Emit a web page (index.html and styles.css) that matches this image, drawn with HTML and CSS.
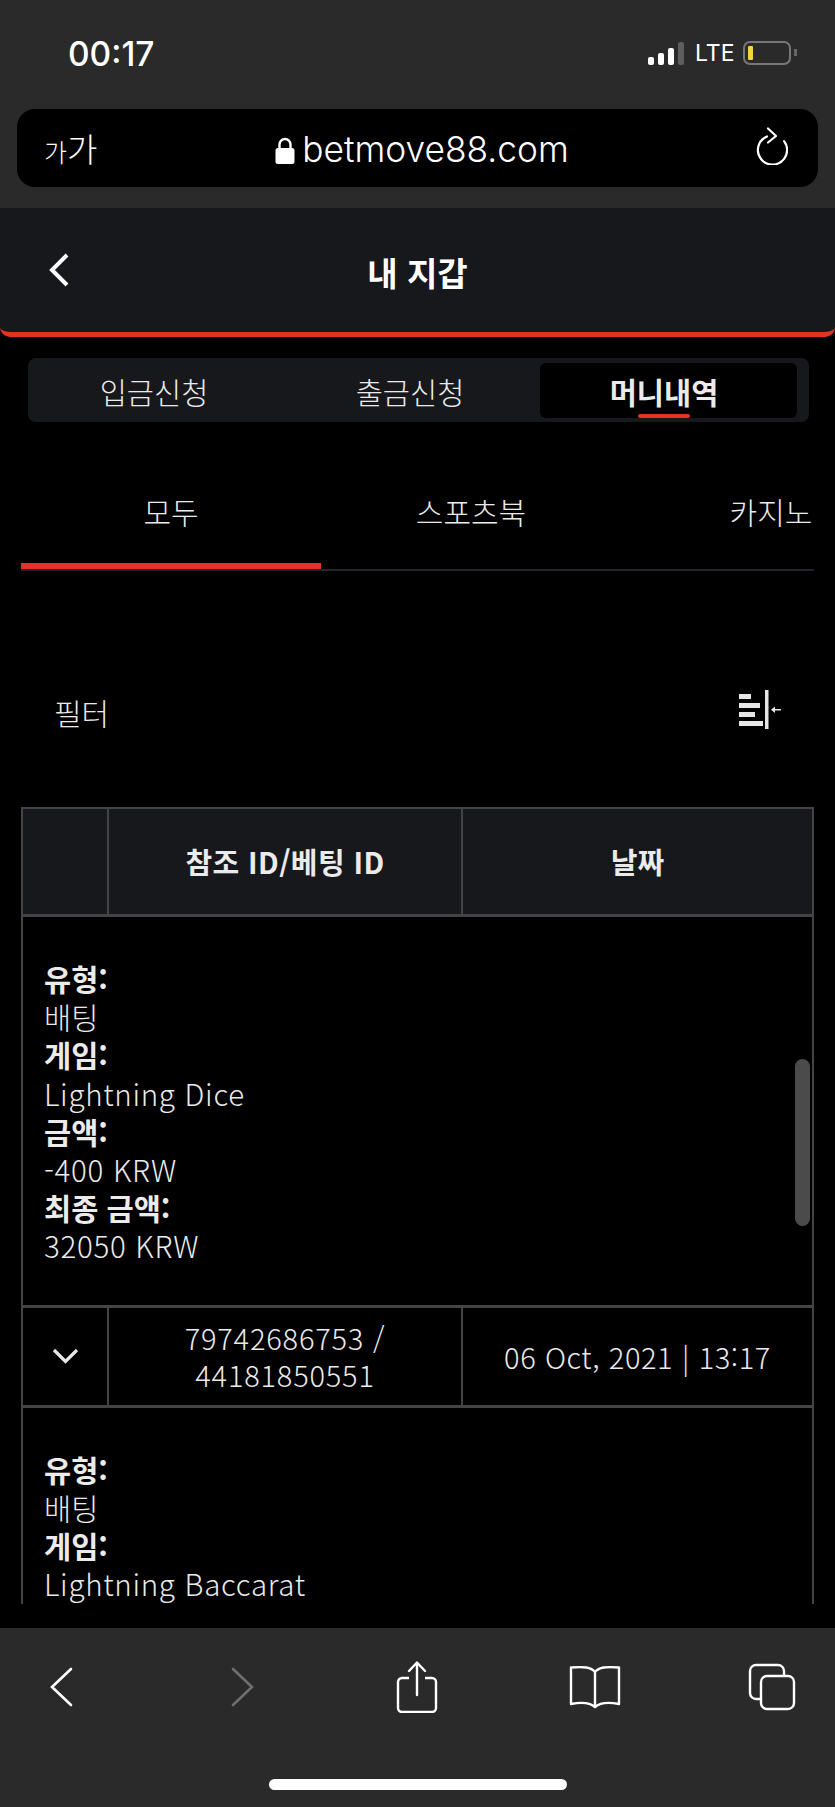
FILE: index.html
```html
<!DOCTYPE html>
<html lang="ko">
<head>
  <meta charset="UTF-8" />
  <meta name="viewport" content="width=device-width, initial-scale=1.0"/>
  <title>내 지갑</title>
  <link rel="stylesheet" href="styles.css">
</head>
<body>

  <!-- Browser top -->
  <section class="browser-top">
    <div class="status-bar">
      <span class="time">00:17</span>
      <div class="status-right">
        <div class="signal">
          <i class="bar b1"></i><i class="bar b2"></i><i class="bar b3"></i><i class="bar b4"></i>
        </div>
        <span class="lte">LTE</span>
        <div class="battery"><i class="battery-fill"></i></div>
        <i class="battery-nub"></i>
      </div>
    </div>
    <div class="url-bar">
      <span class="aa"><small>가</small>가</span>
      <div class="url">
        <svg class="lock" width="20" height="27" viewBox="0 0 20 27">
          <path d="M4.5 12V7.500a5.500 5.500 0 0 1 11 0V12" fill="none" stroke="#fff" stroke-width="2.400"/>
          <rect x="0.500" y="11" width="19" height="16" rx="2.500" fill="#fff"/>
        </svg>
        <span>betmove88.com</span>
      </div>
      <svg class="reload" width="32" height="38" viewBox="0 0 32 38">
        <path d="M11 9.500a14.600 14.600 0 1 0 10.500 -0.200" fill="none" stroke="#fff" stroke-width="2.200" stroke-linecap="round" stroke-dasharray="72 100"/>
        <path d="M12 1.500l8 7.500-8 6.500" fill="none" stroke="#fff" stroke-width="2.200" stroke-linecap="round" stroke-linejoin="round"/>
      </svg>
    </div>
  </section>

  <!-- Page header -->
  <header class="page-header">
    <svg class="header-back" width="20" height="34" viewBox="0 0 20 34">
      <path d="M18 2L3 17l15 15" fill="none" stroke="#fff" stroke-width="4"/>
    </svg>
    <h1>내 지갑</h1>
  </header>

  <!-- Wallet tabs -->
  <nav class="wallet-tabs">
    <div class="wallet-tab">입금신청</div>
    <div class="wallet-tab">출금신청</div>
    <div class="wallet-tab active">머니내역</div>
  </nav>

  <!-- Category tabs -->
  <nav class="cat-tabs">
    <div class="cat-tab active">모두</div>
    <div class="cat-tab">스포츠북</div>
    <div class="cat-tab">카지노</div>
  </nav>

  <div class="filter-row">
    <span>필터</span>
    <svg class="filter-icon" width="42" height="39" viewBox="0 0 42 39">
      <g fill="#e6e6e6">
        <rect x="0" y="4" width="12" height="5"/>
        <rect x="0" y="13" width="21" height="5"/>
        <rect x="0" y="22" width="16" height="5"/>
        <rect x="0" y="31" width="24" height="5"/>
        <rect x="26" y="0" width="3.500" height="39"/>
        <rect x="35" y="19" width="7" height="1.500"/>
        <path d="M32 19.700l4-3.200v6.400z"/>
      </g>
    </svg>
  </div>

  <!-- Money history -->
  <div class="history">
    <div class="history-row history-head">
      <div class="cell"></div>
      <div class="cell head-id">참조 ID/베팅 ID</div>
      <div class="cell">날짜</div>
    </div>

    <div class="detail">
      <b>유형:</b>
      <span>배팅</span>
      <b>게임:</b>
      <span class="latin">Lightning Dice</span>
      <b>금액:</b>
      <span class="latin">-400 KRW</span>
      <b>최종 금액:</b>
      <span class="latin">32050 KRW</span>
    </div>

    <div class="history-row">
      <div class="cell">
        <svg width="27" height="16" viewBox="0 0 27 16">
          <path d="M2 2l11.500 11.500L25 2" fill="none" stroke="#e6e6e6" stroke-width="3.200"/>
        </svg>
      </div>
      <div class="cell ids">79742686753 /<br>44181850551</div>
      <div class="cell date">06 Oct, 2021 | 13:17</div>
    </div>

    <div class="detail">
      <b>유형:</b>
      <span>배팅</span>
      <b>게임:</b>
      <span class="latin">Lightning Baccarat</span>
    </div>

    <div class="scrollbar"></div>
  </div>

  <!-- Browser bottom -->
  <footer class="browser-bottom">
    <div class="toolbar">
      <div class="tool">
        <svg width="24" height="40" viewBox="0 0 24 40">
          <path d="M22 2L3 20l19 18" fill="none" stroke="#fff" stroke-width="2.600" stroke-linecap="round"/>
        </svg>
      </div>
      <div class="tool tool-forward">
        <svg width="24" height="40" viewBox="0 0 24 40">
          <path d="M2 2l19 18L2 38" fill="none" stroke="#6f6f6f" stroke-width="2.600" stroke-linecap="round"/>
        </svg>
      </div>
      <div class="tool tool-share">
        <svg width="42" height="52" viewBox="0 0 42 52">
          <path d="M13 17H6a4 4 0 0 0-4 4v26a4 4 0 0 0 4 4h30a4 4 0 0 0 4-4V21a4 4 0 0 0-4-4h-7" fill="none" stroke="#fff" stroke-width="2.400"/>
          <path d="M21 34V2M13 10l8-8.500 8 8.500" fill="none" stroke="#fff" stroke-width="2.400" stroke-linecap="round" stroke-linejoin="round"/>
        </svg>
      </div>
      <div class="tool tool-book">
        <svg width="52" height="44" viewBox="0 0 52 44">
          <path d="M26 7C22 2 15 1.500 2 2.500V39c10-2 19-1.500 24 3 5-4.500 14-5 24-3V2.500C37 1.500 30 2 26 7zV42" fill="none" stroke="#fff" stroke-width="2.400" stroke-linejoin="round"/>
        </svg>
      </div>
      <div class="tool tool-tabs">
        <svg width="48" height="48" viewBox="0 0 48 48">
          <rect x="13" y="13" width="33" height="33" rx="6" fill="none" stroke="#fff" stroke-width="2.400"/>
          <path d="M13 36H8a6 6 0 0 1-6-6V8a6 6 0 0 1 6-6h22a6 6 0 0 1 6 6v5" fill="none" stroke="#fff" stroke-width="2.400"/>
        </svg>
      </div>
    </div>
    <div class="home-bar"></div>
  </footer>

</body>
</html>
```

FILE: styles.css
```css
* {
  padding: 0;
  margin: 0;
  box-sizing: border-box;
}

body {
  width: 835px;
  height: 1807px;
  display: flex;
  flex-direction: column;
  background: #000;
  color: #ebebeb;
  font-family: "Noto Sans CJK KR", "Noto Sans", sans-serif;
  font-weight: 300;
  overflow: hidden;
}

/* browser top */
.browser-top {
  height: 208px;
  padding: 0 17px;
  background: #2a2a2a;
  flex-shrink: 0;
}

.status-bar {
  height: 109px;
  display: flex;
  justify-content: space-between;
  padding: 34px 21px 0 51px;
  color: #fff;
  font-family: Inter, sans-serif;
}

.time {
  font-size: 33.500px;
  font-weight: 500;
  line-height: 40px;
}

.status-right {
  display: flex;
  align-items: flex-start;
  padding-top: 7px;
}

.signal {
  display: flex;
  align-items: flex-end;
  gap: 4px;
  height: 24px;
}

.bar {
  width: 6px;
  border-radius: 2px;
  background: #fff;
}

.b1 { height: 8px; }
.b2 { height: 12px; }
.b3 { height: 17px; }
.b4 { height: 23px; background: #5e5e5e; }

.lte {
  margin-left: 11px;
  font-size: 23px;
  font-weight: 400;
  line-height: 24px;
  width: 48px;
}

.battery {
  width: 48px;
  height: 24px;
  padding: 3px;
  border: 2px solid #777;
  border-radius: 7px;
}

.battery-fill {
  display: block;
  width: 5px;
  height: 14px;
  border-radius: 1px;
  background: #f5d33f;
}

.battery-nub {
  width: 3px;
  height: 7px;
  margin: 8px 0 0 3px;
  background: #666;
}

.url-bar {
  height: 78px;
  display: flex;
  align-items: center;
  justify-content: space-between;
  padding: 0 30px 0 27px;
  background: #000;
  border-radius: 18px;
  color: #fff;
}

.aa {
  width: 54px;
  font-size: 33px;
  line-height: 1;
  white-space: nowrap;
}

.aa small {
  font-size: 25px;
}

.url {
  display: flex;
  align-items: center;
  gap: 7px;
  margin: 3px 10px 0 0;
  font-family: Inter, sans-serif;
  font-size: 35.300px;
  line-height: 44px;
}

.lock {
  margin-top: 2px;
}

.reload {
  display: block;
  margin-top: -4px;
}

/* page header */
.page-header {
  position: relative;
  height: 129px;
  flex-shrink: 0;
  display: flex;
  align-items: center;
  justify-content: center;
  padding-top: 5px;
  background: #17181c;
  border-bottom: 5px solid #e53323;
  border-radius: 0 0 10px 10px;
}

.page-header h1 {
  font-size: 33px;
  font-weight: 700;
  line-height: 1.2;
  color: #fff;
}

.header-back {
  position: absolute;
  left: 49px;
  top: 45px;
}

/* wallet tabs */
.wallet-tabs {
  height: 64px;
  margin: 21px 26px 0 28px;
  padding: 5px 12px 4px 0;
  flex-shrink: 0;
  display: grid;
  grid-template-columns: 252px 260px 257px;
  background: #17181c;
  border-radius: 8px;
}

.wallet-tab {
  display: flex;
  align-items: center;
  justify-content: center;
  font-size: 29.500px;
}

.wallet-tab.active {
  position: relative;
  padding-right: 9px;
  background: #000;
  border-radius: 6px;
  font-weight: 700;
}

.wallet-tab.active::after {
  content: "";
  position: absolute;
  left: 98px;
  bottom: 0;
  width: 52px;
  height: 4px;
  border-radius: 2px;
  background: #e53323;
}

/* category tabs */
.cat-tabs {
  height: 149px;
  margin: 0 21px;
  flex-shrink: 0;
  display: flex;
  overflow: hidden;
  border-bottom: 2px solid #23242a;
}

.cat-tab {
  width: 300px;
  flex-shrink: 0;
  padding-top: 65px;
  font-size: 30px;
  line-height: 48px;
  text-align: center;
}

.cat-tab.active {
  border-bottom: 7px solid #e53323;
  margin-bottom: -1px;
}

/* filter */
.filter-row {
  height: 236px;
  flex-shrink: 0;
  display: flex;
  align-items: center;
  justify-content: space-between;
  padding: 46px 54px 0 54px;
  font-size: 30px;
}

.filter-icon {
  display: block;
  margin-top: -6px;
}

/* money history */
.history {
  position: relative;
  height: 797px;
  margin: 0 21px;
  flex-shrink: 0;
  overflow: hidden;
  border: solid #444;
  border-width: 2px 2px 0 2px;
}

.history-row {
  min-height: 103px;
  display: grid;
  grid-template-columns: 84px 354px 1fr;
  border-top: 3px solid #444;
  border-bottom: 3px solid #444;
}

.history-head {
  min-height: 108px;
  border-top: 0;
  background: #17181c;
  font-weight: 700;
}

.cell {
  display: flex;
  align-items: center;
  justify-content: center;
  text-align: center;
  font-size: 29px;
  line-height: 37px;
}

.cell + .cell {
  border-left: 2px solid #444;
}

.head-id {
  letter-spacing: 0.400px;
}

.ids {
  letter-spacing: 0.800px;
}

.date {
  letter-spacing: 0.600px;
}

.detail {
  display: flex;
  flex-direction: column;
  padding: 42px 21px 40px;
  font-size: 29.500px;
  line-height: 38.200px;
}

.detail b {
  font-weight: 700;
}

.latin {
  letter-spacing: 0.700px;
}

.scrollbar {
  position: absolute;
  top: 250px;
  right: 2px;
  width: 15px;
  height: 167px;
  border-radius: 8px;
  background: #4b4b4b;
}

/* browser bottom */
.browser-bottom {
  margin-top: 24px;
  flex: 1;
  position: relative;
  background: #2a2a2a;
}

.toolbar {
  display: flex;
  align-items: center;
  justify-content: space-between;
  height: 82px;
  margin-top: 18px;
  padding: 0 39px 0 35px;
}

.tool {
  width: 52px;
  display: flex;
  justify-content: center;
}

.tool-forward {
  padding-left: 10px;
}

.tool-share {
  padding-left: 5px;
}

.tool-book {
  margin-left: 4px;
}

.tool-tabs {
  margin-right: -2px;
}

.home-bar {
  position: absolute;
  left: 269px;
  bottom: 17px;
  width: 298px;
  height: 11px;
  border-radius: 6px;
  background: #fff;
}
```
